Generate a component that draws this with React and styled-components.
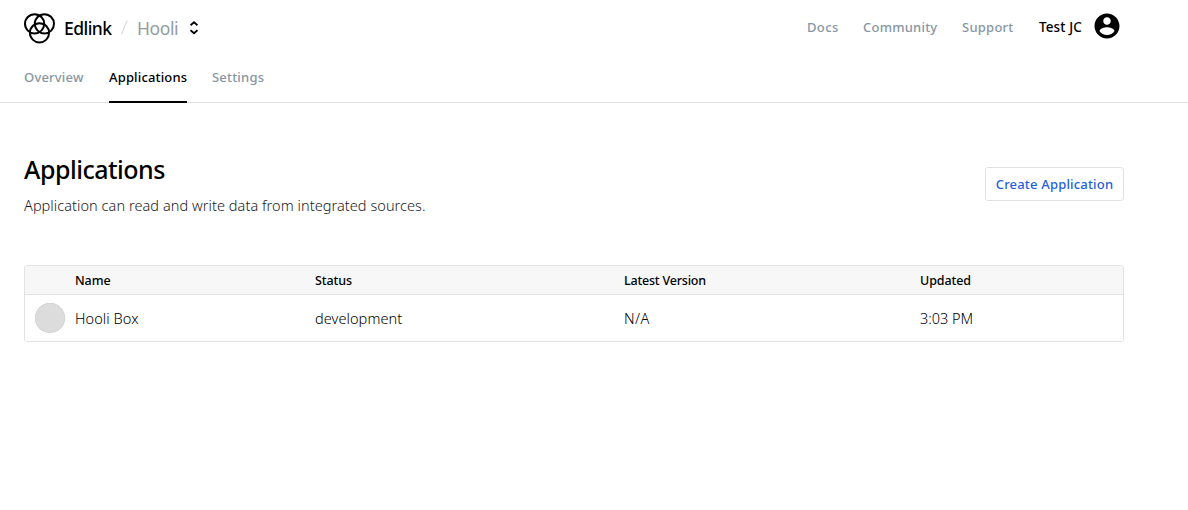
import React from "react";
import styled, { createGlobalStyle } from "styled-components";

const GlobalStyle = createGlobalStyle`
  * { box-sizing: border-box; }
  body {
    margin: 0;
    background: #fff;
    color: #000;
    font-family: "Noto Sans", "Open Sans", sans-serif;
  }
`;

const Label = styled.span`
  display: inline-block;
  white-space: nowrap;
  font-size: ${(p) => p.$size || 13}px;
  font-weight: ${(p) => p.$weight || 350};
  letter-spacing: ${(p) => p.$track || 0}px;
  color: ${(p) => p.$color || "inherit"};
`;

const Header = styled.header`
  height: 103px;
  border-bottom: 1px solid #dfdfdf;
  padding: 0 66px 0 24px;
  display: flex;
  flex-direction: column;
`;

const TopBar = styled.div`
  height: 55px;
  display: flex;
  justify-content: space-between;
`;

const Brand = styled.div`
  display: flex;
  align-items: center;
  height: 55px;

  svg { flex: none; }
`;

const BrandName = styled(Label)`
  margin-left: 9px;
  width: 47px;
`;

const Slash = styled.svg`
  margin: 0 9px 0 9px;
`;

const OrgName = styled(Label)`
  width: 41px;
  margin-right: 12px;
`;

const Links = styled.nav`
  display: flex;
  align-items: center;
  height: 52px;
`;

const LinkItem = styled.a`
  width: ${(p) => p.$w}px;
  margin-right: ${(p) => p.$gap}px;
  display: block;
`;

const Tabs = styled.nav`
  display: flex;
  gap: 25px;
  height: 48px;
`;

const Tab = styled.a`
  width: ${(p) => p.$w}px;
  height: 48px;
  line-height: 18px;
  padding-top: 12px;
  border-bottom: 2px solid ${(p) => (p.$active ? "#000" : "transparent")};
`;

const Main = styled.main`
  padding: 49px 64px 0 24px;
`;

const Intro = styled.section`
  display: flex;
  justify-content: space-between;
  height: 113px;
`;

const Title = styled.h1`
  margin: 0;
  line-height: 34px;
  font-size: 25px;
  font-weight: 500;
  letter-spacing: -0.5px;
`;

const Description = styled.p`
  margin: 9px 0 0;
  line-height: 20px;
  font-size: 0;
`;

const Button = styled.button`
  width: 139px;
  height: 34px;
  margin-top: 15px;
  padding: 0;
  border: 1px solid #e2e2e2;
  border-radius: 3px;
  background: #fff;
  color: #1f5fe0;
  font-family: inherit;
`;

const Table = styled.div`
  border: 1px solid #e2e2e2;
  border-radius: 3px;
  overflow: hidden;
`;

const Row = styled.div`
  display: grid;
  grid-template-columns: 40px 240px 309px 296px 1fr;
  align-items: center;
  padding-left: 10px;
  height: ${(p) => (p.$head ? 28 : 46)}px;
  background: ${(p) => (p.$head ? "#f7f7f7" : "#fff")};
  box-sizing: content-box;
  border-bottom: ${(p) => (p.$head ? "1px solid #e2e2e2" : "0")};
`;

const Avatar = styled.div`
  width: 30px;
  height: 30px;
  border-radius: 50%;
  background: #dcdcdc;
  box-shadow: inset 0 0 0 0.5px #cacaca;
`;

const muted = "#8796a3";

const Logo = () => (
  <svg width="31" height="32" viewBox="0 0 31 32" fill="none" stroke="#000" strokeWidth="2">
    <circle cx="10.6" cy="11.8" r="9.6" />
    <circle cx="20.4" cy="11.8" r="9.6" />
    <circle cx="15.5" cy="20.8" r="9.6" />
  </svg>
);

const Switcher = () => (
  <svg width="8" height="14" viewBox="0 0 8 14" fill="none" stroke="#000" strokeWidth="1.8">
    <path d="M0.5 4.2 L4 1.2 L7.5 4.2" />
    <path d="M0.5 9.2 L4 12.2 L7.5 9.2" />
  </svg>
);

const UserIcon = () => (
  <svg width="30" height="30" viewBox="0 0 24 24">
    <path d="M12 2C6.48 2 2 6.48 2 12s4.48 10 10 10 10-4.48 10-10S17.52 2 12 2zm0 3c1.66 0 3 1.34 3 3s-1.34 3-3 3-3-1.34-3-3 1.34-3 3-3zm0 14.2c-2.5 0-4.71-1.28-6-3.22.03-1.99 4-3.08 6-3.08 1.99 0 5.97 1.09 6 3.08-1.29 1.94-3.5 3.22-6 3.22z" />
  </svg>
);

export default function App() {
  return (
    <>
      <GlobalStyle />
      <Header>
        <TopBar>
          <Brand>
            <Logo />
            <BrandName $size={17.5} $weight={500} $track={-0.55}>Edlink</BrandName>
            <Slash width="8" height="15" viewBox="0 0 8 15" stroke="#cfd4d8" fill="none">
              <path d="M7 0.5 L1.5 14.5" />
            </Slash>
            <OrgName $size={17.5} $weight={400} $track={-0.4} $color="#929ca5">Hooli</OrgName>
            <Switcher />
          </Brand>
          <Links>
            <LinkItem $w={31} $gap={25}><Label $weight={550} $track={0.35} $color={muted}>Docs</Label></LinkItem>
            <LinkItem $w={75} $gap={24}><Label $weight={550} $track={0.22} $color={muted}>Community</Label></LinkItem>
            <LinkItem $w={52} $gap={25}><Label $weight={550} $track={0.25} $color={muted}>Support</Label></LinkItem>
            <LinkItem $w={43} $gap={10}><Label $weight={500} $size={13.5} $track={0.1}>Test JC</Label></LinkItem>
            <UserIcon />
          </Links>
        </TopBar>
        <Tabs>
          <Tab $w={60}><Label $weight={550} $track={0.2} $color={muted}>Overview</Label></Tab>
          <Tab $w={78} $active><Label $weight={550} $track={0.15}>Applications</Label></Tab>
          <Tab $w={52}><Label $weight={550} $track={0.2} $color={muted}>Settings</Label></Tab>
        </Tabs>
      </Header>
      <Main>
        <Intro>
          <div>
            <Title>Applications</Title>
            <Description>
              <Label $size={14.5} $track={0.06} $color="#1a1a1a">Application can read and write data from integrated sources.</Label>
            </Description>
          </div>
          <Button><Label $weight={550} $track={0.18}>Create Application</Label></Button>
        </Intro>
        <Table>
          <Row $head>
            <span />
            <Label $weight={500} $size={12.5} $track={-0.1}>Name</Label>
            <Label $weight={500} $size={12.5} $track={-0.1}>Status</Label>
            <Label $weight={500} $size={12.5} $track={-0.2}>Latest Version</Label>
            <Label $weight={500} $size={12.5} $track={-0.1}>Updated</Label>
          </Row>
          <Row>
            <Avatar />
            <Label $size={14.5} $track={0.08}>Hooli Box</Label>
            <Label $size={14.5} $track={0.08}>development</Label>
            <Label $size={14.5} $track={0.5}>N/A</Label>
            <Label $size={14.5} $track={-0.05}>3:03 PM</Label>
          </Row>
        </Table>
      </Main>
    </>
  );
}
